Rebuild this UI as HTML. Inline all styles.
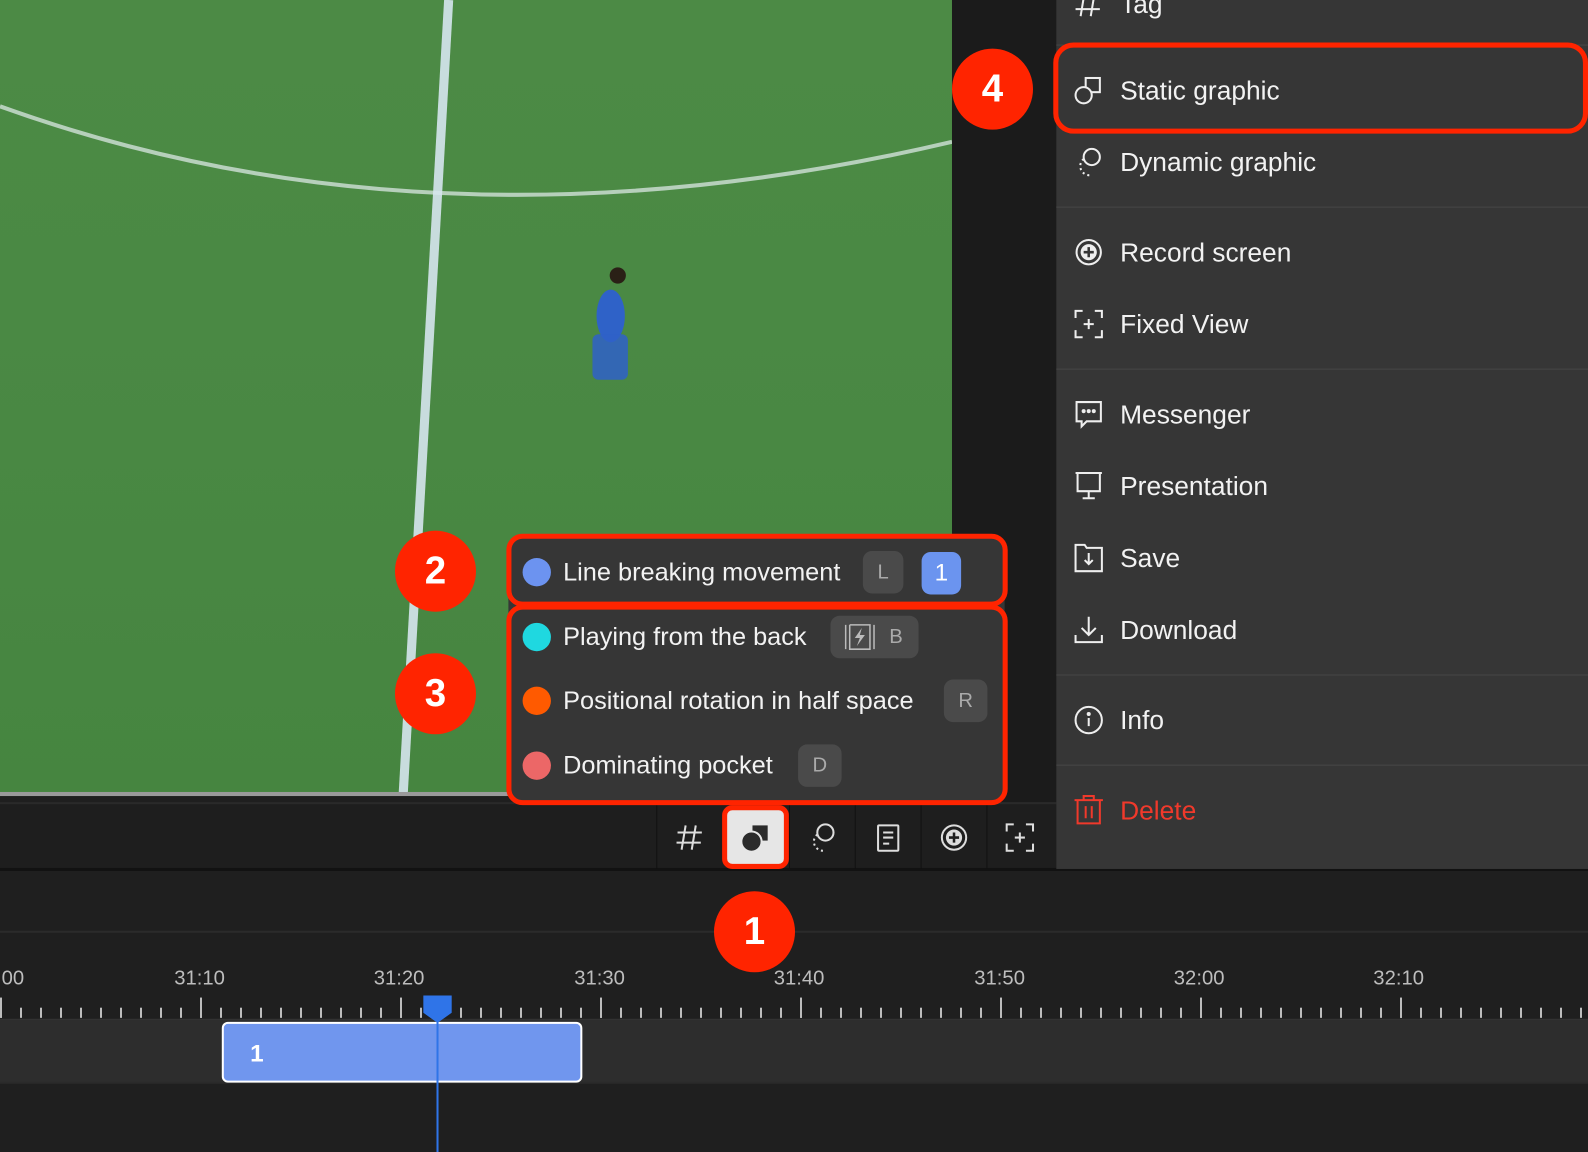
<!DOCTYPE html>
<html><head><meta charset="utf-8"><style>
*{margin:0;padding:0;box-sizing:border-box}
html,body{width:1588px;height:1152px;overflow:hidden;background:#1f1f1f}
#w{width:1568px;height:1138px;position:relative;transform:scale(1.01276);transform-origin:0 0;font-family:"Liberation Sans",sans-serif;color:#f2f2f2}
.abs{position:absolute}
.menu{left:1043px;top:0;width:545px;height:858px;background:#363636}
.mi{position:absolute;left:0;width:545px;height:40px;font-size:26px;display:flex;align-items:center}
.mi svg{position:absolute;left:17px;width:30px;height:30px}
.mi span{position:absolute;left:63px}
.sep{position:absolute;left:0;width:545px;height:1px;background:#474747}
.pop{left:502px;top:530px;width:490px;height:262px;background:#363636;border-radius:14px}
.row{position:absolute;left:0;height:40px;display:flex;align-items:center;font-size:25px}
.dot{position:absolute;left:14px;width:28px;height:28px;border-radius:50%}
.key{position:absolute;height:42px;border-radius:9px;background:#4a4a4a;color:#aaa;font-size:20px;display:flex;align-items:center;justify-content:center}
.red{border:5px solid #ff2400;border-radius:16px}
.badge{width:80px;height:80px;border-radius:50%;background:#ff2400;color:#fff;font-weight:bold;font-size:38px;display:flex;align-items:center;justify-content:center}
.tb{top:795px;height:63px;width:65px;border-left:1px solid #111;display:flex;align-items:center;justify-content:center}
.lbl{top:955px;font-size:20px;color:#bdbdbd}
</style></head><body><div id="w">
<div class="abs" style="left:0;top:0;width:940px;height:786px;background:linear-gradient(180deg,#4c8a45 0%,#4a8944 40%,#468540 100%)">
<svg width="940" height="786" class="abs" style="left:0;top:0">
<path d="M0 105 Q430 260 940 140" stroke="#c9dcd0" stroke-width="4" fill="none" opacity=".85"/>
<path d="M443 0 L398 786" stroke="#d6e6ee" stroke-width="9" fill="none" opacity=".9"/>
<g fill="#2f62c8"><ellipse cx="603" cy="312" rx="14" ry="26"/><rect x="585" y="330" width="35" height="45" rx="6" opacity=".85"/></g>
<circle cx="610" cy="272" r="8" fill="#2a2016"/>
</svg>
<div class="abs" style="left:0;top:782px;width:940px;height:4px;background:#9a9a9a"></div>
</div>
<div class="abs" style="left:940px;top:0;width:103px;height:858px;background:#1b1b1b"></div>
<div class="abs" style="left:0;top:792px;width:1043px;height:66px;background:#1e1e1e;border-top:2px solid #2a2a2a"></div>
<div class="abs" style="left:0;top:857px;width:1588px;height:3px;background:#121212"></div>
<div class="abs tb" style="left:648px"><svg width="30" height="30" viewBox="0 0 30 30" stroke="#ddd" stroke-width="2" fill="none"><path d="M11 3 L7 27 M21 3 L17 27 M3 10 H27 M2 20 H26"/></svg></div>
<div class="abs tb" style="left:713px;background:#e6e6e6;border-radius:10px;border:5px solid #ff2400;width:66px"><svg width="34" height="34" viewBox="0 0 34 34"><rect x="14" y="5" width="15" height="15" fill="#2b2b2b"/><circle cx="13" cy="21" r="10" fill="#2b2b2b" stroke="#e6e6e6" stroke-width="2"/></svg></div>
<div class="abs tb" style="left:779px"><svg width="34" height="34" viewBox="0 0 34 34" stroke="#ddd" stroke-width="2" fill="none"><circle cx="20" cy="12" r="8"/><path d="M12 14 A9 9 0 0 0 18 30" stroke-dasharray="2 3"/></svg></div>
<div class="abs tb" style="left:844px"><svg width="30" height="30" viewBox="0 0 30 30" stroke="#ddd" stroke-width="2" fill="none"><rect x="5" y="3" width="20" height="25" rx="1"/><path d="M10 10 H20 M10 15 H20 M10 21 H16"/></svg></div>
<div class="abs tb" style="left:909px"><svg width="30" height="30" viewBox="0 0 30 30" fill="none"><circle cx="15" cy="15" r="12" stroke="#ddd" stroke-width="2"/><circle cx="15" cy="15" r="8" fill="#ddd"/><path d="M15 10 V20 M10 15 H20" stroke="#1e1e1e" stroke-width="2.5"/></svg></div>
<div class="abs tb" style="left:974px"><svg width="30" height="30" viewBox="0 0 30 30" stroke="#ddd" stroke-width="2" fill="none"><path d="M2 9 V2 H9 M21 2 H28 V9 M28 21 V28 H21 M9 28 H2 V21 M15 10 V20 M10 15 H20"/></svg></div>
<div class="abs" style="left:0;top:919px;width:1588px;height:2px;background:#2b2b2b"></div>
<div class="abs lbl" style="left:-4px">:00</div>
<div class="abs lbl" style="left:172px">31:10</div>
<div class="abs lbl" style="left:369px">31:20</div>
<div class="abs lbl" style="left:567px">31:30</div>
<div class="abs lbl" style="left:764px">31:40</div>
<div class="abs lbl" style="left:962px">31:50</div>
<div class="abs lbl" style="left:1159px">32:00</div>
<div class="abs lbl" style="left:1356px">32:10</div>
<div class="abs" style="left:0;top:995px;width:1588px;height:10px;background:repeating-linear-gradient(90deg,#bdbdbd 0 2px,transparent 2px 19.75px)"></div>
<div class="abs" style="left:0;top:985px;width:1588px;height:20px;background:repeating-linear-gradient(90deg,#bdbdbd 0 2px,transparent 2px 197.5px)"></div>
<div class="abs" style="left:0;top:1006px;width:1588px;height:64px;background:#2d2d2d;border-top:1px solid #333;border-bottom:2px solid #2a2a2a"></div>
<div class="abs" style="left:219px;top:1009px;width:356px;height:60px;background:#7096ee;border:2px solid #fff;border-radius:6px;font-size:24px;font-weight:bold;color:#fff;padding:16px 0 0 26px">1</div>
<div class="abs" style="left:431px;top:1005px;width:2px;height:147px;background:#2f74e8"></div>
<svg class="abs" style="left:417px;top:983px" width="30" height="28"><path d="M1 0 H29 V17 L15 27 L1 17Z" fill="#2f74e8"/></svg>
<div class="abs pop">
 <div class="row" style="top:15px"><div class="dot" style="background:#6c93f0"></div><span style="position:absolute;left:54px;white-space:nowrap">Line breaking movement</span></div>
 <div class="key" style="left:350px;top:14px;width:40px">L</div>
 <div class="key" style="left:408px;top:15px;width:39px;background:#6b94ef;color:#fff;font-size:24px">1</div>
 <div class="row" style="top:79px"><div class="dot" style="background:#1fd8e0"></div><span style="position:absolute;left:54px;white-space:nowrap">Playing from the back</span></div>
 <div class="key" style="left:318px;top:78px;width:87px;justify-content:flex-start;padding-left:14px"><svg width="30" height="26" viewBox="0 0 30 26" fill="none" stroke="#bbb" stroke-width="1.5"><path d="M1 1 V25 M5 1 V25 H25 V1 H5 M29 1 V25"/><path d="M17 4 L10 14 H15 L12 22 L20 11 H15Z" fill="#bbb" stroke="none"/></svg><span style="margin-left:14px">B</span></div>
 <div class="row" style="top:142px"><div class="dot" style="background:#ff5a00"></div><span style="position:absolute;left:54px;white-space:nowrap">Positional rotation in half space</span></div>
 <div class="key" style="left:430px;top:141px;width:43px">R</div>
 <div class="row" style="top:206px"><div class="dot" style="background:#ec6767"></div><span style="position:absolute;left:54px;white-space:nowrap">Dominating pocket</span></div>
 <div class="key" style="left:286px;top:205px;width:43px">D</div>
</div>
<div class="abs red" style="left:500px;top:527px;width:495px;height:72px"></div>
<div class="abs red" style="left:500px;top:597px;width:495px;height:198px"></div>
<div class="abs menu">
 <div class="mi" style="top:-16px"><svg viewBox="0 0 30 30" stroke="#eee" stroke-width="2" fill="none"><path d="M11 3 L7 27 M21 3 L17 27 M3 10 H27 M2 20 H26"/></svg><span>Tag</span></div>
 <div class="sep" style="top:44px"></div>
 <div class="mi" style="top:69px"><svg viewBox="0 0 30 30" stroke="#eee" stroke-width="2" fill="none"><rect x="12" y="3" width="14" height="14"/><circle cx="10" cy="20" r="8" fill="#363636"/></svg><span>Static graphic</span></div>
 <div class="mi" style="top:140px"><svg viewBox="0 0 30 30" stroke="#eee" stroke-width="2" fill="none"><circle cx="18" cy="10" r="8"/><path d="M10 12 A9 9 0 0 0 16 28" stroke-dasharray="2 3"/></svg><span>Dynamic graphic</span></div>
 <div class="sep" style="top:204px"></div>
 <div class="mi" style="top:229px"><svg viewBox="0 0 30 30" fill="none"><circle cx="15" cy="15" r="12" stroke="#eee" stroke-width="2"/><circle cx="15" cy="15" r="8" fill="#eee"/><path d="M15 10 V20 M10 15 H20" stroke="#363636" stroke-width="2.5"/></svg><span>Record screen</span></div>
 <div class="mi" style="top:300px"><svg viewBox="0 0 30 30" stroke="#eee" stroke-width="2" fill="none"><path d="M2 9 V2 H9 M21 2 H28 V9 M28 21 V28 H21 M9 28 H2 V21 M15 10 V20 M10 15 H20"/></svg><span>Fixed View</span></div>
 <div class="sep" style="top:364px"></div>
 <div class="mi" style="top:389px"><svg viewBox="0 0 30 30" stroke="#eee" stroke-width="2" fill="none"><path d="M3 3 H27 V22 H13 L8 27 V22 H3Z"/><circle cx="10" cy="12" r="1" fill="#eee"/><circle cx="15" cy="12" r="1" fill="#eee"/><circle cx="20" cy="12" r="1" fill="#eee"/></svg><span>Messenger</span></div>
 <div class="mi" style="top:460px"><svg viewBox="0 0 30 30" stroke="#eee" stroke-width="2" fill="none"><path d="M2 2 H28 M4 2 V20 H26 V2 M15 20 V27 M9 27 H21"/></svg><span>Presentation</span></div>
 <div class="mi" style="top:531px"><svg viewBox="0 0 30 30" stroke="#eee" stroke-width="2" fill="none"><path d="M2 2 H11 L13 5 H28 V28 H2Z M15 10 V21 M11 17 L15 21 L19 17"/></svg><span>Save</span></div>
 <div class="mi" style="top:602px"><svg viewBox="0 0 30 30" stroke="#eee" stroke-width="2" fill="none"><path d="M15 2 V20 M8 13 L15 20 L22 13 M2 20 V27 H28 V20"/></svg><span>Download</span></div>
 <div class="sep" style="top:666px"></div>
 <div class="mi" style="top:691px"><svg viewBox="0 0 30 30" stroke="#eee" stroke-width="2" fill="none"><circle cx="15" cy="15" r="13"/><path d="M15 13 V21"/><circle cx="15" cy="9" r="1" fill="#eee"/></svg><span>Info</span></div>
 <div class="sep" style="top:755px"></div>
 <div class="mi" style="top:780px;color:#f0392b"><svg viewBox="0 0 30 30" stroke="#f0392b" stroke-width="2" fill="none"><path d="M1 5 H29 M10 5 V1 H20 V5 M4 5 V28 H26 V5 M12 11 V23 M18 11 V23"/></svg><span>Delete</span></div>
</div>
<div class="abs red" style="left:1040px;top:42px;width:528px;height:90px;border-radius:20px"></div>
<div class="abs badge" style="left:705px;top:880px">1</div>
<div class="abs badge" style="left:390px;top:524px">2</div>
<div class="abs badge" style="left:390px;top:645px">3</div>
<div class="abs badge" style="left:940px;top:48px">4</div>
</div></body></html>
